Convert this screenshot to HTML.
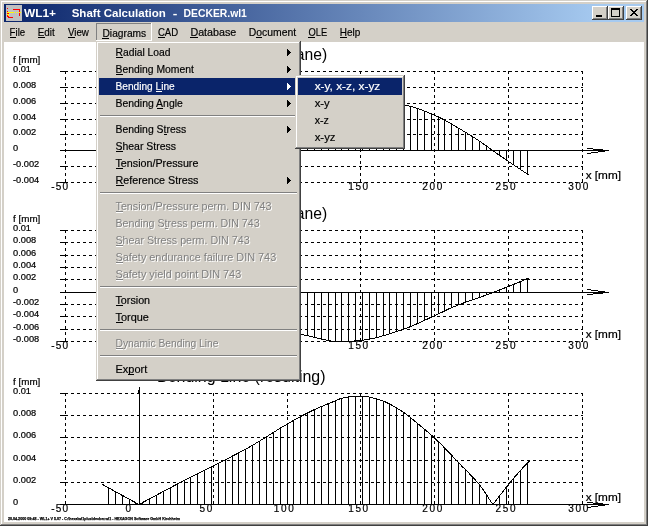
<!DOCTYPE html>
<html><head><meta charset="utf-8"><title>WL1+ Shaft Calculation - DECKER.wl1</title>
<style>html,body{margin:0;padding:0;background:#D4D0C8;overflow:hidden}svg{display:block;will-change:transform}text{white-space:pre}</style></head>
<body>
<svg width="648" height="526" viewBox="0 0 648 526" font-family="Liberation Sans, Arial, sans-serif" shape-rendering="crispEdges">
<defs><linearGradient id="tg" gradientUnits="userSpaceOnUse" x1="4" y1="0" x2="600" y2="0"><stop offset="0" stop-color="#0A246A"/><stop offset="1" stop-color="#A6CAF0"/></linearGradient></defs>
<rect x="0" y="0" width="648" height="526" fill="#D4D0C8"/>
<rect x="0" y="525" width="648" height="1" fill="#404040"/>
<rect x="647" y="0" width="1" height="526" fill="#404040"/>
<rect x="1" y="1" width="645" height="1" fill="#FFFFFF"/>
<rect x="1" y="1" width="1" height="523" fill="#FFFFFF"/>
<rect x="1" y="524" width="646" height="1" fill="#808080"/>
<rect x="646" y="1" width="1" height="524" fill="#808080"/>
<rect x="4" y="4" width="640" height="18" fill="url(#tg)"/>
<rect x="4" y="42" width="640" height="480" fill="#FFFFFF"/>
<text x="157.00" y="60.00" font-size="16.5" fill="#000" textLength="170.30" lengthAdjust="spacingAndGlyphs" >Bending Line (x-y plane)</text>
<text x="13.00" y="63.00" font-size="9.5" fill="#000" textLength="27.30" lengthAdjust="spacingAndGlyphs" stroke="#000" stroke-width="0.2">f [mm]</text>
<text x="13.00" y="72.00" font-size="9" fill="#000" textLength="18.04" lengthAdjust="spacingAndGlyphs" stroke="#000" stroke-width="0.2">0.01</text>
<rect x="60" y="71" width="5" height="1" fill="#000"/>
<line x1="65" y1="71.5" x2="583" y2="71.5" stroke="#000" stroke-width="1" stroke-dasharray="3 3"/>
<text x="13.00" y="88.00" font-size="9" fill="#000" textLength="23.19" lengthAdjust="spacingAndGlyphs" stroke="#000" stroke-width="0.2">0.008</text>
<rect x="60" y="87" width="5" height="1" fill="#000"/>
<line x1="65" y1="87.5" x2="583" y2="87.5" stroke="#000" stroke-width="1" stroke-dasharray="3 3"/>
<text x="13.00" y="104.00" font-size="9" fill="#000" textLength="23.19" lengthAdjust="spacingAndGlyphs" stroke="#000" stroke-width="0.2">0.006</text>
<rect x="60" y="103" width="5" height="1" fill="#000"/>
<line x1="65" y1="103.5" x2="583" y2="103.5" stroke="#000" stroke-width="1" stroke-dasharray="3 3"/>
<text x="13.00" y="120.00" font-size="9" fill="#000" textLength="23.19" lengthAdjust="spacingAndGlyphs" stroke="#000" stroke-width="0.2">0.004</text>
<rect x="60" y="119" width="5" height="1" fill="#000"/>
<line x1="65" y1="119.5" x2="583" y2="119.5" stroke="#000" stroke-width="1" stroke-dasharray="3 3"/>
<text x="13.00" y="135.00" font-size="9" fill="#000" textLength="23.19" lengthAdjust="spacingAndGlyphs" stroke="#000" stroke-width="0.2">0.002</text>
<rect x="60" y="134" width="5" height="1" fill="#000"/>
<line x1="65" y1="134.5" x2="583" y2="134.5" stroke="#000" stroke-width="1" stroke-dasharray="3 3"/>
<text x="13.00" y="151.00" font-size="9" fill="#000" textLength="5.15" lengthAdjust="spacingAndGlyphs" stroke="#000" stroke-width="0.2">0</text>
<rect x="60" y="150" width="5" height="1" fill="#000"/>
<rect x="65" y="150" width="544" height="1" fill="#000"/>
<text x="13.00" y="167.00" font-size="9" fill="#000" textLength="26.28" lengthAdjust="spacingAndGlyphs" stroke="#000" stroke-width="0.2">-0.002</text>
<rect x="60" y="166" width="5" height="1" fill="#000"/>
<line x1="65" y1="166.5" x2="583" y2="166.5" stroke="#000" stroke-width="1" stroke-dasharray="3 3"/>
<text x="13.00" y="183.00" font-size="9" fill="#000" textLength="26.28" lengthAdjust="spacingAndGlyphs" stroke="#000" stroke-width="0.2">-0.004</text>
<rect x="60" y="182" width="5" height="1" fill="#000"/>
<line x1="65" y1="182.5" x2="583" y2="182.5" stroke="#000" stroke-width="1" stroke-dasharray="3 3"/>
<line x1="65.5" y1="71" x2="65.5" y2="183" stroke="#000" stroke-width="1" stroke-dasharray="3 3"/>
<text x="51.30" y="190.00" font-size="10" fill="#000" textLength="16.73" lengthAdjust="spacing" stroke="#000" stroke-width="0.2">-50</text>
<line x1="139.5" y1="71" x2="139.5" y2="183" stroke="#000" stroke-width="1" stroke-dasharray="3 3"/>
<text x="125.50" y="190.00" font-size="10" fill="#000" textLength="5.56" lengthAdjust="spacing" stroke="#000" stroke-width="0.2">0</text>
<line x1="213.5" y1="71" x2="213.5" y2="183" stroke="#000" stroke-width="1" stroke-dasharray="3 3"/>
<text x="199.60" y="190.00" font-size="10" fill="#000" textLength="12.76" lengthAdjust="spacing" stroke="#000" stroke-width="0.2">50</text>
<line x1="287.5" y1="71" x2="287.5" y2="183" stroke="#000" stroke-width="1" stroke-dasharray="3 3"/>
<text x="273.80" y="190.00" font-size="10" fill="#000" textLength="19.96" lengthAdjust="spacing" stroke="#000" stroke-width="0.2">100</text>
<line x1="360.5" y1="71" x2="360.5" y2="183" stroke="#000" stroke-width="1" stroke-dasharray="3 3"/>
<text x="348.20" y="190.00" font-size="10" fill="#000" textLength="19.96" lengthAdjust="spacing" stroke="#000" stroke-width="0.2">150</text>
<line x1="434.5" y1="71" x2="434.5" y2="183" stroke="#000" stroke-width="1" stroke-dasharray="3 3"/>
<text x="422.30" y="190.00" font-size="10" fill="#000" textLength="19.96" lengthAdjust="spacing" stroke="#000" stroke-width="0.2">200</text>
<line x1="508.5" y1="71" x2="508.5" y2="183" stroke="#000" stroke-width="1" stroke-dasharray="3 3"/>
<text x="495.60" y="190.00" font-size="10" fill="#000" textLength="19.96" lengthAdjust="spacing" stroke="#000" stroke-width="0.2">250</text>
<line x1="582.5" y1="71" x2="582.5" y2="183" stroke="#000" stroke-width="1" stroke-dasharray="3 3"/>
<text x="568.30" y="190.00" font-size="10" fill="#000" textLength="19.96" lengthAdjust="spacing" stroke="#000" stroke-width="0.2">300</text>
<text x="585.70" y="179.00" font-size="10" fill="#000" textLength="35.30" lengthAdjust="spacingAndGlyphs" stroke="#000" stroke-width="0.2">x [mm]</text>
<rect x="587" y="153" width="4" height="1" fill="#000"/>
<rect x="591" y="152" width="7" height="1" fill="#000"/>
<rect x="598" y="151" width="7" height="1" fill="#000"/>
<rect x="593" y="149" width="10" height="1" fill="#000"/>
<rect x="587" y="148" width="6" height="1" fill="#000"/>
<line x1="527.5" y1="150.0" x2="527.5" y2="174.7" stroke="#000" stroke-width="1"/>
<line x1="520.5" y1="150.0" x2="520.5" y2="170.1" stroke="#000" stroke-width="1"/>
<line x1="513.5" y1="150.0" x2="513.5" y2="165.4" stroke="#000" stroke-width="1"/>
<line x1="506.5" y1="150.0" x2="506.5" y2="160.6" stroke="#000" stroke-width="1"/>
<line x1="499.5" y1="150.0" x2="499.5" y2="155.8" stroke="#000" stroke-width="1"/>
<line x1="492.5" y1="150.0" x2="492.5" y2="150.9" stroke="#000" stroke-width="1"/>
<line x1="486.5" y1="146.1" x2="486.5" y2="150.5" stroke="#000" stroke-width="1"/>
<line x1="479.5" y1="141.2" x2="479.5" y2="150.5" stroke="#000" stroke-width="1"/>
<line x1="472.5" y1="136.6" x2="472.5" y2="150.5" stroke="#000" stroke-width="1"/>
<line x1="465.5" y1="132.3" x2="465.5" y2="150.5" stroke="#000" stroke-width="1"/>
<line x1="458.5" y1="128.1" x2="458.5" y2="150.5" stroke="#000" stroke-width="1"/>
<line x1="451.5" y1="124.0" x2="451.5" y2="150.5" stroke="#000" stroke-width="1"/>
<line x1="444.5" y1="120.1" x2="444.5" y2="150.5" stroke="#000" stroke-width="1"/>
<line x1="438.5" y1="117.0" x2="438.5" y2="150.5" stroke="#000" stroke-width="1"/>
<line x1="431.5" y1="113.9" x2="431.5" y2="150.5" stroke="#000" stroke-width="1"/>
<line x1="424.5" y1="111.1" x2="424.5" y2="150.5" stroke="#000" stroke-width="1"/>
<line x1="417.5" y1="108.5" x2="417.5" y2="150.5" stroke="#000" stroke-width="1"/>
<line x1="410.5" y1="106.3" x2="410.5" y2="150.5" stroke="#000" stroke-width="1"/>
<line x1="403.5" y1="104.7" x2="403.5" y2="150.5" stroke="#000" stroke-width="1"/>
<line x1="396.5" y1="103.4" x2="396.5" y2="150.5" stroke="#000" stroke-width="1"/>
<line x1="389.5" y1="102.3" x2="389.5" y2="150.5" stroke="#000" stroke-width="1"/>
<line x1="383.5" y1="101.6" x2="383.5" y2="150.5" stroke="#000" stroke-width="1"/>
<line x1="376.5" y1="101.1" x2="376.5" y2="150.5" stroke="#000" stroke-width="1"/>
<line x1="369.5" y1="100.6" x2="369.5" y2="150.5" stroke="#000" stroke-width="1"/>
<line x1="362.5" y1="100.3" x2="362.5" y2="150.5" stroke="#000" stroke-width="1"/>
<line x1="355.5" y1="100.1" x2="355.5" y2="150.5" stroke="#000" stroke-width="1"/>
<line x1="348.5" y1="100.0" x2="348.5" y2="150.5" stroke="#000" stroke-width="1"/>
<line x1="341.5" y1="100.2" x2="341.5" y2="150.5" stroke="#000" stroke-width="1"/>
<line x1="335.5" y1="100.6" x2="335.5" y2="150.5" stroke="#000" stroke-width="1"/>
<line x1="328.5" y1="101.3" x2="328.5" y2="150.5" stroke="#000" stroke-width="1"/>
<line x1="321.5" y1="102.1" x2="321.5" y2="150.5" stroke="#000" stroke-width="1"/>
<line x1="314.5" y1="102.9" x2="314.5" y2="150.5" stroke="#000" stroke-width="1"/>
<line x1="307.5" y1="103.8" x2="307.5" y2="150.5" stroke="#000" stroke-width="1"/>
<line x1="300.5" y1="104.9" x2="300.5" y2="150.5" stroke="#000" stroke-width="1"/>
<line x1="293.5" y1="106.2" x2="293.5" y2="150.5" stroke="#000" stroke-width="1"/>
<line x1="287.5" y1="107.4" x2="287.5" y2="150.5" stroke="#000" stroke-width="1"/>
<line x1="280.5" y1="109.0" x2="280.5" y2="150.5" stroke="#000" stroke-width="1"/>
<line x1="273.5" y1="110.6" x2="273.5" y2="150.5" stroke="#000" stroke-width="1"/>
<line x1="266.5" y1="112.4" x2="266.5" y2="150.5" stroke="#000" stroke-width="1"/>
<line x1="259.5" y1="114.1" x2="259.5" y2="150.5" stroke="#000" stroke-width="1"/>
<line x1="252.5" y1="116.0" x2="252.5" y2="150.5" stroke="#000" stroke-width="1"/>
<line x1="245.5" y1="118.1" x2="245.5" y2="150.5" stroke="#000" stroke-width="1"/>
<line x1="238.5" y1="120.3" x2="238.5" y2="150.5" stroke="#000" stroke-width="1"/>
<line x1="232.5" y1="122.3" x2="232.5" y2="150.5" stroke="#000" stroke-width="1"/>
<line x1="225.5" y1="124.6" x2="225.5" y2="150.5" stroke="#000" stroke-width="1"/>
<line x1="218.5" y1="127.0" x2="218.5" y2="150.5" stroke="#000" stroke-width="1"/>
<line x1="211.5" y1="129.4" x2="211.5" y2="150.5" stroke="#000" stroke-width="1"/>
<line x1="204.5" y1="131.6" x2="204.5" y2="150.5" stroke="#000" stroke-width="1"/>
<line x1="197.5" y1="133.8" x2="197.5" y2="150.5" stroke="#000" stroke-width="1"/>
<line x1="190.5" y1="135.9" x2="190.5" y2="150.5" stroke="#000" stroke-width="1"/>
<line x1="184.5" y1="137.7" x2="184.5" y2="150.5" stroke="#000" stroke-width="1"/>
<line x1="177.5" y1="139.9" x2="177.5" y2="150.5" stroke="#000" stroke-width="1"/>
<line x1="170.5" y1="142.0" x2="170.5" y2="150.5" stroke="#000" stroke-width="1"/>
<line x1="163.5" y1="144.1" x2="163.5" y2="150.5" stroke="#000" stroke-width="1"/>
<line x1="156.5" y1="146.0" x2="156.5" y2="150.5" stroke="#000" stroke-width="1"/>
<line x1="149.5" y1="147.9" x2="149.5" y2="150.5" stroke="#000" stroke-width="1"/>
<line x1="142.5" y1="149.7" x2="142.5" y2="150.5" stroke="#000" stroke-width="1"/>
<line x1="135.5" y1="150.0" x2="135.5" y2="151.8" stroke="#000" stroke-width="1"/>
<line x1="129.5" y1="150.0" x2="129.5" y2="153.1" stroke="#000" stroke-width="1"/>
<line x1="122.5" y1="150.0" x2="122.5" y2="154.6" stroke="#000" stroke-width="1"/>
<line x1="115.5" y1="150.0" x2="115.5" y2="155.9" stroke="#000" stroke-width="1"/>
<line x1="108.5" y1="150.0" x2="108.5" y2="157.2" stroke="#000" stroke-width="1"/>
<polyline points="102.0,157.8 103.0,157.6 104.0,157.5 105.0,157.3 106.0,157.1 107.0,157.0 108.0,156.8 109.0,156.6 110.0,156.4 111.0,156.3 112.0,156.1 113.0,155.9 114.0,155.7 115.0,155.5 116.0,155.3 117.0,155.1 118.0,154.9 119.0,154.8 120.0,154.6 121.0,154.4 122.0,154.2 123.0,154.0 124.0,153.8 125.0,153.6 126.0,153.3 127.0,153.1 128.0,152.9 129.0,152.7 130.0,152.5 131.0,152.3 132.0,152.1 133.0,151.9 134.0,151.6 135.0,151.4 136.0,151.2 137.0,151.0 138.0,150.7 139.0,150.5 140.0,150.3 141.0,150.0 142.0,149.8 143.0,149.6 144.0,149.3 145.0,149.1 146.0,148.8 147.0,148.6 148.0,148.3 149.0,148.0 150.0,147.8 151.0,147.5 152.0,147.3 153.0,147.0 154.0,146.7 155.0,146.4 156.0,146.2 157.0,145.9 158.0,145.6 159.0,145.3 160.0,145.1 161.0,144.8 162.0,144.5 163.0,144.2 164.0,143.9 165.0,143.6 166.0,143.3 167.0,143.0 168.0,142.7 169.0,142.4 170.0,142.1 171.0,141.8 172.0,141.5 173.0,141.2 174.0,140.9 175.0,140.6 176.0,140.3 177.0,140.0 178.0,139.7 179.0,139.4 180.0,139.1 181.0,138.8 182.0,138.5 183.0,138.2 184.0,137.9 185.0,137.6 186.0,137.3 187.0,137.0 188.0,136.7 189.0,136.4 190.0,136.0 191.0,135.7 192.0,135.4 193.0,135.1 194.0,134.8 195.0,134.5 196.0,134.2 197.0,133.9 198.0,133.6 199.0,133.3 200.0,133.0 201.0,132.7 202.0,132.4 203.0,132.1 204.0,131.8 205.0,131.5 206.0,131.1 207.0,130.8 208.0,130.5 209.0,130.2 210.0,129.9 211.0,129.5 212.0,129.2 213.0,128.9 214.0,128.5 215.0,128.2 216.0,127.9 217.0,127.5 218.0,127.2 219.0,126.9 220.0,126.5 221.0,126.2 222.0,125.8 223.0,125.5 224.0,125.2 225.0,124.8 226.0,124.5 227.0,124.1 228.0,123.8 229.0,123.5 230.0,123.1 231.0,122.8 232.0,122.5 233.0,122.1 234.0,121.8 235.0,121.5 236.0,121.1 237.0,120.8 238.0,120.5 239.0,120.1 240.0,119.8 241.0,119.5 242.0,119.2 243.0,118.9 244.0,118.6 245.0,118.2 246.0,117.9 247.0,117.6 248.0,117.3 249.0,117.0 250.0,116.7 251.0,116.4 252.0,116.2 253.0,115.9 254.0,115.6 255.0,115.3 256.0,115.0 257.0,114.8 258.0,114.5 259.0,114.3 260.0,114.0 261.0,113.7 262.0,113.5 263.0,113.2 264.0,113.0 265.0,112.7 266.0,112.5 267.0,112.2 268.0,112.0 269.0,111.7 270.0,111.5 271.0,111.2 272.0,111.0 273.0,110.8 274.0,110.5 275.0,110.3 276.0,110.0 277.0,109.8 278.0,109.6 279.0,109.3 280.0,109.1 281.0,108.8 282.0,108.6 283.0,108.4 284.0,108.2 285.0,107.9 286.0,107.7 287.0,107.5 288.0,107.3 289.0,107.1 290.0,106.9 291.0,106.7 292.0,106.5 293.0,106.3 294.0,106.1 295.0,105.9 296.0,105.7 297.0,105.5 298.0,105.3 299.0,105.1 300.0,105.0 301.0,104.8 302.0,104.6 303.0,104.5 304.0,104.3 305.0,104.2 306.0,104.0 307.0,103.9 308.0,103.8 309.0,103.6 310.0,103.5 311.0,103.4 312.0,103.3 313.0,103.1 314.0,103.0 315.0,102.9 316.0,102.8 317.0,102.6 318.0,102.5 319.0,102.4 320.0,102.3 321.0,102.1 322.0,102.0 323.0,101.9 324.0,101.8 325.0,101.7 326.0,101.6 327.0,101.5 328.0,101.3 329.0,101.2 330.0,101.1 331.0,101.0 332.0,100.9 333.0,100.9 334.0,100.8 335.0,100.7 336.0,100.6 337.0,100.5 338.0,100.4 339.0,100.4 340.0,100.3 341.0,100.3 342.0,100.2 343.0,100.2 344.0,100.1 345.0,100.1 346.0,100.1 347.0,100.0 348.0,100.0 349.0,100.0 350.0,100.0 351.0,100.0 352.0,100.0 353.0,100.0 354.0,100.0 355.0,100.0 356.0,100.1 357.0,100.1 358.0,100.1 359.0,100.2 360.0,100.2 361.0,100.2 362.0,100.3 363.0,100.3 364.0,100.3 365.0,100.4 366.0,100.4 367.0,100.5 368.0,100.5 369.0,100.6 370.0,100.7 371.0,100.7 372.0,100.8 373.0,100.8 374.0,100.9 375.0,101.0 376.0,101.0 377.0,101.1 378.0,101.2 379.0,101.2 380.0,101.3 381.0,101.4 382.0,101.5 383.0,101.5 384.0,101.6 385.0,101.7 386.0,101.8 387.0,102.0 388.0,102.1 389.0,102.2 390.0,102.4 391.0,102.5 392.0,102.6 393.0,102.8 394.0,103.0 395.0,103.1 396.0,103.3 397.0,103.5 398.0,103.6 399.0,103.8 400.0,104.0 401.0,104.2 402.0,104.4 403.0,104.6 404.0,104.8 405.0,105.0 406.0,105.2 407.0,105.4 408.0,105.7 409.0,105.9 410.0,106.2 411.0,106.5 412.0,106.8 413.0,107.0 414.0,107.4 415.0,107.7 416.0,108.0 417.0,108.3 418.0,108.7 419.0,109.0 420.0,109.4 421.0,109.8 422.0,110.1 423.0,110.5 424.0,110.9 425.0,111.3 426.0,111.7 427.0,112.1 428.0,112.5 429.0,112.9 430.0,113.3 431.0,113.7 432.0,114.2 433.0,114.6 434.0,115.0 435.0,115.4 436.0,115.9 437.0,116.3 438.0,116.8 439.0,117.3 440.0,117.8 441.0,118.3 442.0,118.8 443.0,119.3 444.0,119.8 445.0,120.4 446.0,120.9 447.0,121.5 448.0,122.0 449.0,122.6 450.0,123.2 451.0,123.8 452.0,124.3 453.0,124.9 454.0,125.5 455.0,126.1 456.0,126.7 457.0,127.3 458.0,127.8 459.0,128.4 460.0,129.0 461.0,129.6 462.0,130.2 463.0,130.8 464.0,131.4 465.0,132.0 466.0,132.6 467.0,133.2 468.0,133.8 469.0,134.4 470.0,135.0 471.0,135.7 472.0,136.3 473.0,136.9 474.0,137.6 475.0,138.2 476.0,138.9 477.0,139.5 478.0,140.2 479.0,140.8 480.0,141.5 481.0,142.2 482.0,142.9 483.0,143.6 484.0,144.3 485.0,145.0 486.0,145.7 487.0,146.5 488.0,147.2 489.0,147.9 490.0,148.6 491.0,149.4 492.0,150.1 493.0,150.8 494.0,151.5 495.0,152.2 496.0,152.9 497.0,153.6 498.0,154.3 499.0,155.0 500.0,155.7 501.0,156.3 502.0,157.0 503.0,157.7 504.0,158.4 505.0,159.1 506.0,159.8 507.0,160.5 508.0,161.1 509.0,161.8 510.0,162.5 511.0,163.2 512.0,163.9 513.0,164.5 514.0,165.2 515.0,165.9 516.0,166.6 517.0,167.2 518.0,167.9 519.0,168.6 520.0,169.2 521.0,169.9 522.0,170.6 523.0,171.2 524.0,171.9 525.0,172.6 526.0,173.2 527.0,173.9 528.0,174.5 529.0,175.2 529.5,175.5" fill="none" stroke="#000" stroke-width="1"/>
<text x="157.00" y="219.00" font-size="16.5" fill="#000" textLength="170.30" lengthAdjust="spacingAndGlyphs" >Bending Line (x-z plane)</text>
<text x="13.00" y="222.00" font-size="9.5" fill="#000" textLength="27.30" lengthAdjust="spacingAndGlyphs" stroke="#000" stroke-width="0.2">f [mm]</text>
<text x="13.00" y="231.00" font-size="9" fill="#000" textLength="18.04" lengthAdjust="spacingAndGlyphs" stroke="#000" stroke-width="0.2">0.01</text>
<rect x="60" y="230" width="5" height="1" fill="#000"/>
<line x1="65" y1="230.5" x2="583" y2="230.5" stroke="#000" stroke-width="1" stroke-dasharray="3 3"/>
<text x="13.00" y="243.00" font-size="9" fill="#000" textLength="23.19" lengthAdjust="spacingAndGlyphs" stroke="#000" stroke-width="0.2">0.008</text>
<rect x="60" y="242" width="5" height="1" fill="#000"/>
<line x1="65" y1="242.5" x2="583" y2="242.5" stroke="#000" stroke-width="1" stroke-dasharray="3 3"/>
<text x="13.00" y="256.00" font-size="9" fill="#000" textLength="23.19" lengthAdjust="spacingAndGlyphs" stroke="#000" stroke-width="0.2">0.006</text>
<rect x="60" y="255" width="5" height="1" fill="#000"/>
<line x1="65" y1="255.5" x2="583" y2="255.5" stroke="#000" stroke-width="1" stroke-dasharray="3 3"/>
<text x="13.00" y="268.00" font-size="9" fill="#000" textLength="23.19" lengthAdjust="spacingAndGlyphs" stroke="#000" stroke-width="0.2">0.004</text>
<rect x="60" y="267" width="5" height="1" fill="#000"/>
<line x1="65" y1="267.5" x2="583" y2="267.5" stroke="#000" stroke-width="1" stroke-dasharray="3 3"/>
<text x="13.00" y="280.00" font-size="9" fill="#000" textLength="23.19" lengthAdjust="spacingAndGlyphs" stroke="#000" stroke-width="0.2">0.002</text>
<rect x="60" y="279" width="5" height="1" fill="#000"/>
<line x1="65" y1="279.5" x2="583" y2="279.5" stroke="#000" stroke-width="1" stroke-dasharray="3 3"/>
<text x="13.00" y="293.00" font-size="9" fill="#000" textLength="5.15" lengthAdjust="spacingAndGlyphs" stroke="#000" stroke-width="0.2">0</text>
<rect x="60" y="292" width="5" height="1" fill="#000"/>
<rect x="65" y="292" width="544" height="1" fill="#000"/>
<text x="13.00" y="305.00" font-size="9" fill="#000" textLength="26.28" lengthAdjust="spacingAndGlyphs" stroke="#000" stroke-width="0.2">-0.002</text>
<rect x="60" y="304" width="5" height="1" fill="#000"/>
<line x1="65" y1="304.5" x2="583" y2="304.5" stroke="#000" stroke-width="1" stroke-dasharray="3 3"/>
<text x="13.00" y="317.00" font-size="9" fill="#000" textLength="26.28" lengthAdjust="spacingAndGlyphs" stroke="#000" stroke-width="0.2">-0.004</text>
<rect x="60" y="316" width="5" height="1" fill="#000"/>
<line x1="65" y1="316.5" x2="583" y2="316.5" stroke="#000" stroke-width="1" stroke-dasharray="3 3"/>
<text x="13.00" y="330.00" font-size="9" fill="#000" textLength="26.28" lengthAdjust="spacingAndGlyphs" stroke="#000" stroke-width="0.2">-0.006</text>
<rect x="60" y="329" width="5" height="1" fill="#000"/>
<line x1="65" y1="329.5" x2="583" y2="329.5" stroke="#000" stroke-width="1" stroke-dasharray="3 3"/>
<text x="13.00" y="342.00" font-size="9" fill="#000" textLength="26.28" lengthAdjust="spacingAndGlyphs" stroke="#000" stroke-width="0.2">-0.008</text>
<rect x="60" y="341" width="5" height="1" fill="#000"/>
<line x1="65" y1="341.5" x2="583" y2="341.5" stroke="#000" stroke-width="1" stroke-dasharray="3 3"/>
<line x1="65.5" y1="230" x2="65.5" y2="342" stroke="#000" stroke-width="1" stroke-dasharray="3 3"/>
<text x="51.30" y="349.00" font-size="10" fill="#000" textLength="16.73" lengthAdjust="spacing" stroke="#000" stroke-width="0.2">-50</text>
<line x1="139.5" y1="230" x2="139.5" y2="342" stroke="#000" stroke-width="1" stroke-dasharray="3 3"/>
<text x="125.50" y="349.00" font-size="10" fill="#000" textLength="5.56" lengthAdjust="spacing" stroke="#000" stroke-width="0.2">0</text>
<line x1="213.5" y1="230" x2="213.5" y2="342" stroke="#000" stroke-width="1" stroke-dasharray="3 3"/>
<text x="199.60" y="349.00" font-size="10" fill="#000" textLength="12.76" lengthAdjust="spacing" stroke="#000" stroke-width="0.2">50</text>
<line x1="287.5" y1="230" x2="287.5" y2="342" stroke="#000" stroke-width="1" stroke-dasharray="3 3"/>
<text x="273.80" y="349.00" font-size="10" fill="#000" textLength="19.96" lengthAdjust="spacing" stroke="#000" stroke-width="0.2">100</text>
<line x1="360.5" y1="230" x2="360.5" y2="342" stroke="#000" stroke-width="1" stroke-dasharray="3 3"/>
<text x="348.20" y="349.00" font-size="10" fill="#000" textLength="19.96" lengthAdjust="spacing" stroke="#000" stroke-width="0.2">150</text>
<line x1="434.5" y1="230" x2="434.5" y2="342" stroke="#000" stroke-width="1" stroke-dasharray="3 3"/>
<text x="422.30" y="349.00" font-size="10" fill="#000" textLength="19.96" lengthAdjust="spacing" stroke="#000" stroke-width="0.2">200</text>
<line x1="508.5" y1="230" x2="508.5" y2="342" stroke="#000" stroke-width="1" stroke-dasharray="3 3"/>
<text x="495.60" y="349.00" font-size="10" fill="#000" textLength="19.96" lengthAdjust="spacing" stroke="#000" stroke-width="0.2">250</text>
<line x1="582.5" y1="230" x2="582.5" y2="342" stroke="#000" stroke-width="1" stroke-dasharray="3 3"/>
<text x="568.30" y="349.00" font-size="10" fill="#000" textLength="19.96" lengthAdjust="spacing" stroke="#000" stroke-width="0.2">300</text>
<text x="585.70" y="338.00" font-size="10" fill="#000" textLength="35.30" lengthAdjust="spacingAndGlyphs" stroke="#000" stroke-width="0.2">x [mm]</text>
<rect x="587" y="289" width="4" height="1" fill="#000"/>
<rect x="591" y="290" width="7" height="1" fill="#000"/>
<rect x="598" y="291" width="7" height="1" fill="#000"/>
<rect x="593" y="293" width="10" height="1" fill="#000"/>
<rect x="587" y="294" width="6" height="1" fill="#000"/>
<line x1="527.5" y1="278.6" x2="527.5" y2="292.5" stroke="#000" stroke-width="1"/>
<line x1="520.5" y1="281.5" x2="520.5" y2="292.5" stroke="#000" stroke-width="1"/>
<line x1="513.5" y1="284.4" x2="513.5" y2="292.5" stroke="#000" stroke-width="1"/>
<line x1="506.5" y1="287.2" x2="506.5" y2="292.5" stroke="#000" stroke-width="1"/>
<line x1="499.5" y1="290.0" x2="499.5" y2="292.5" stroke="#000" stroke-width="1"/>
<line x1="492.5" y1="292.0" x2="492.5" y2="293.2" stroke="#000" stroke-width="1"/>
<line x1="486.5" y1="292.0" x2="486.5" y2="295.4" stroke="#000" stroke-width="1"/>
<line x1="479.5" y1="292.0" x2="479.5" y2="297.9" stroke="#000" stroke-width="1"/>
<line x1="472.5" y1="292.0" x2="472.5" y2="300.3" stroke="#000" stroke-width="1"/>
<line x1="465.5" y1="292.0" x2="465.5" y2="302.8" stroke="#000" stroke-width="1"/>
<line x1="458.5" y1="292.0" x2="458.5" y2="305.4" stroke="#000" stroke-width="1"/>
<line x1="451.5" y1="292.0" x2="451.5" y2="308.2" stroke="#000" stroke-width="1"/>
<line x1="444.5" y1="292.0" x2="444.5" y2="311.4" stroke="#000" stroke-width="1"/>
<line x1="438.5" y1="292.0" x2="438.5" y2="314.4" stroke="#000" stroke-width="1"/>
<line x1="431.5" y1="292.0" x2="431.5" y2="317.6" stroke="#000" stroke-width="1"/>
<line x1="424.5" y1="292.0" x2="424.5" y2="320.9" stroke="#000" stroke-width="1"/>
<line x1="417.5" y1="292.0" x2="417.5" y2="324.1" stroke="#000" stroke-width="1"/>
<line x1="410.5" y1="292.0" x2="410.5" y2="327.1" stroke="#000" stroke-width="1"/>
<line x1="403.5" y1="292.0" x2="403.5" y2="329.8" stroke="#000" stroke-width="1"/>
<line x1="396.5" y1="292.0" x2="396.5" y2="332.1" stroke="#000" stroke-width="1"/>
<line x1="389.5" y1="292.0" x2="389.5" y2="334.3" stroke="#000" stroke-width="1"/>
<line x1="383.5" y1="292.0" x2="383.5" y2="336.1" stroke="#000" stroke-width="1"/>
<line x1="376.5" y1="292.0" x2="376.5" y2="338.1" stroke="#000" stroke-width="1"/>
<line x1="369.5" y1="292.0" x2="369.5" y2="339.6" stroke="#000" stroke-width="1"/>
<line x1="362.5" y1="292.0" x2="362.5" y2="340.7" stroke="#000" stroke-width="1"/>
<line x1="355.5" y1="292.0" x2="355.5" y2="341.4" stroke="#000" stroke-width="1"/>
<line x1="348.5" y1="292.0" x2="348.5" y2="341.9" stroke="#000" stroke-width="1"/>
<line x1="341.5" y1="292.0" x2="341.5" y2="342.2" stroke="#000" stroke-width="1"/>
<line x1="335.5" y1="292.0" x2="335.5" y2="342.0" stroke="#000" stroke-width="1"/>
<line x1="328.5" y1="292.0" x2="328.5" y2="341.1" stroke="#000" stroke-width="1"/>
<line x1="321.5" y1="292.0" x2="321.5" y2="339.7" stroke="#000" stroke-width="1"/>
<line x1="314.5" y1="292.0" x2="314.5" y2="338.0" stroke="#000" stroke-width="1"/>
<line x1="307.5" y1="292.0" x2="307.5" y2="336.3" stroke="#000" stroke-width="1"/>
<line x1="300.5" y1="292.0" x2="300.5" y2="334.9" stroke="#000" stroke-width="1"/>
<line x1="293.5" y1="292.0" x2="293.5" y2="333.8" stroke="#000" stroke-width="1"/>
<line x1="287.5" y1="292.0" x2="287.5" y2="332.9" stroke="#000" stroke-width="1"/>
<line x1="280.5" y1="292.0" x2="280.5" y2="331.9" stroke="#000" stroke-width="1"/>
<line x1="273.5" y1="292.0" x2="273.5" y2="330.8" stroke="#000" stroke-width="1"/>
<line x1="266.5" y1="292.0" x2="266.5" y2="329.7" stroke="#000" stroke-width="1"/>
<line x1="259.5" y1="292.0" x2="259.5" y2="328.4" stroke="#000" stroke-width="1"/>
<line x1="252.5" y1="292.0" x2="252.5" y2="326.9" stroke="#000" stroke-width="1"/>
<line x1="245.5" y1="292.0" x2="245.5" y2="325.3" stroke="#000" stroke-width="1"/>
<line x1="238.5" y1="292.0" x2="238.5" y2="323.5" stroke="#000" stroke-width="1"/>
<line x1="232.5" y1="292.0" x2="232.5" y2="321.9" stroke="#000" stroke-width="1"/>
<line x1="225.5" y1="292.0" x2="225.5" y2="319.9" stroke="#000" stroke-width="1"/>
<line x1="218.5" y1="292.0" x2="218.5" y2="317.9" stroke="#000" stroke-width="1"/>
<line x1="211.5" y1="292.0" x2="211.5" y2="315.9" stroke="#000" stroke-width="1"/>
<line x1="204.5" y1="292.0" x2="204.5" y2="313.8" stroke="#000" stroke-width="1"/>
<line x1="197.5" y1="292.0" x2="197.5" y2="311.8" stroke="#000" stroke-width="1"/>
<line x1="190.5" y1="292.0" x2="190.5" y2="309.6" stroke="#000" stroke-width="1"/>
<line x1="184.5" y1="292.0" x2="184.5" y2="307.7" stroke="#000" stroke-width="1"/>
<line x1="177.5" y1="292.0" x2="177.5" y2="305.3" stroke="#000" stroke-width="1"/>
<line x1="170.5" y1="292.0" x2="170.5" y2="303.0" stroke="#000" stroke-width="1"/>
<line x1="163.5" y1="292.0" x2="163.5" y2="300.6" stroke="#000" stroke-width="1"/>
<line x1="156.5" y1="292.0" x2="156.5" y2="298.3" stroke="#000" stroke-width="1"/>
<line x1="149.5" y1="292.0" x2="149.5" y2="296.1" stroke="#000" stroke-width="1"/>
<line x1="142.5" y1="292.0" x2="142.5" y2="294.0" stroke="#000" stroke-width="1"/>
<line x1="135.5" y1="291.6" x2="135.5" y2="292.5" stroke="#000" stroke-width="1"/>
<line x1="129.5" y1="290.0" x2="129.5" y2="292.5" stroke="#000" stroke-width="1"/>
<line x1="122.5" y1="288.2" x2="122.5" y2="292.5" stroke="#000" stroke-width="1"/>
<line x1="115.5" y1="286.5" x2="115.5" y2="292.5" stroke="#000" stroke-width="1"/>
<line x1="108.5" y1="284.9" x2="108.5" y2="292.5" stroke="#000" stroke-width="1"/>
<polyline points="102.0,283.5 103.0,283.7 104.0,283.9 105.0,284.1 106.0,284.4 107.0,284.6 108.0,284.8 109.0,285.0 110.0,285.3 111.0,285.5 112.0,285.7 113.0,286.0 114.0,286.2 115.0,286.4 116.0,286.7 117.0,286.9 118.0,287.1 119.0,287.4 120.0,287.6 121.0,287.8 122.0,288.1 123.0,288.3 124.0,288.6 125.0,288.8 126.0,289.1 127.0,289.3 128.0,289.6 129.0,289.9 130.0,290.1 131.0,290.4 132.0,290.6 133.0,290.9 134.0,291.2 135.0,291.4 136.0,291.7 137.0,292.0 138.0,292.2 139.0,292.5 140.0,292.8 141.0,293.1 142.0,293.3 143.0,293.6 144.0,293.9 145.0,294.2 146.0,294.5 147.0,294.8 148.0,295.1 149.0,295.4 150.0,295.7 151.0,296.0 152.0,296.3 153.0,296.7 154.0,297.0 155.0,297.3 156.0,297.6 157.0,297.9 158.0,298.3 159.0,298.6 160.0,298.9 161.0,299.3 162.0,299.6 163.0,299.9 164.0,300.3 165.0,300.6 166.0,300.9 167.0,301.3 168.0,301.6 169.0,301.9 170.0,302.3 171.0,302.6 172.0,303.0 173.0,303.3 174.0,303.6 175.0,304.0 176.0,304.3 177.0,304.7 178.0,305.0 179.0,305.3 180.0,305.7 181.0,306.0 182.0,306.3 183.0,306.7 184.0,307.0 185.0,307.3 186.0,307.7 187.0,308.0 188.0,308.3 189.0,308.6 190.0,308.9 191.0,309.3 192.0,309.6 193.0,309.9 194.0,310.2 195.0,310.5 196.0,310.8 197.0,311.1 198.0,311.4 199.0,311.7 200.0,312.0 201.0,312.3 202.0,312.6 203.0,312.9 204.0,313.2 205.0,313.5 206.0,313.8 207.0,314.0 208.0,314.3 209.0,314.6 210.0,314.9 211.0,315.2 212.0,315.5 213.0,315.8 214.0,316.1 215.0,316.4 216.0,316.7 217.0,317.0 218.0,317.3 219.0,317.6 220.0,317.9 221.0,318.2 222.0,318.4 223.0,318.7 224.0,319.0 225.0,319.3 226.0,319.6 227.0,319.9 228.0,320.2 229.0,320.4 230.0,320.7 231.0,321.0 232.0,321.3 233.0,321.5 234.0,321.8 235.0,322.1 236.0,322.4 237.0,322.6 238.0,322.9 239.0,323.1 240.0,323.4 241.0,323.7 242.0,323.9 243.0,324.2 244.0,324.4 245.0,324.7 246.0,324.9 247.0,325.2 248.0,325.4 249.0,325.6 250.0,325.9 251.0,326.1 252.0,326.3 253.0,326.5 254.0,326.8 255.0,327.0 256.0,327.2 257.0,327.4 258.0,327.6 259.0,327.8 260.0,328.0 261.0,328.2 262.0,328.4 263.0,328.6 264.0,328.8 265.0,328.9 266.0,329.1 267.0,329.3 268.0,329.4 269.0,329.6 270.0,329.8 271.0,329.9 272.0,330.1 273.0,330.3 274.0,330.4 275.0,330.6 276.0,330.7 277.0,330.9 278.0,331.0 279.0,331.2 280.0,331.3 281.0,331.5 282.0,331.6 283.0,331.7 284.0,331.9 285.0,332.0 286.0,332.2 287.0,332.3 288.0,332.5 289.0,332.6 290.0,332.8 291.0,332.9 292.0,333.1 293.0,333.2 294.0,333.4 295.0,333.5 296.0,333.7 297.0,333.8 298.0,334.0 299.0,334.2 300.0,334.3 301.0,334.5 302.0,334.7 303.0,334.9 304.0,335.1 305.0,335.3 306.0,335.5 307.0,335.7 308.0,335.9 309.0,336.1 310.0,336.4 311.0,336.6 312.0,336.9 313.0,337.1 314.0,337.4 315.0,337.6 316.0,337.8 317.0,338.1 318.0,338.3 319.0,338.6 320.0,338.8 321.0,339.0 322.0,339.3 323.0,339.5 324.0,339.7 325.0,339.9 326.0,340.1 327.0,340.3 328.0,340.5 329.0,340.7 330.0,340.8 331.0,341.0 332.0,341.1 333.0,341.3 334.0,341.4 335.0,341.5 336.0,341.6 337.0,341.6 338.0,341.7 339.0,341.7 340.0,341.7 341.0,341.7 342.0,341.7 343.0,341.7 344.0,341.6 345.0,341.6 346.0,341.6 347.0,341.5 348.0,341.5 349.0,341.4 350.0,341.3 351.0,341.3 352.0,341.2 353.0,341.1 354.0,341.0 355.0,340.9 356.0,340.9 357.0,340.8 358.0,340.7 359.0,340.6 360.0,340.5 361.0,340.4 362.0,340.3 363.0,340.2 364.0,340.0 365.0,339.9 366.0,339.7 367.0,339.6 368.0,339.4 369.0,339.2 370.0,339.0 371.0,338.8 372.0,338.6 373.0,338.4 374.0,338.2 375.0,337.9 376.0,337.7 377.0,337.4 378.0,337.2 379.0,336.9 380.0,336.6 381.0,336.4 382.0,336.1 383.0,335.8 384.0,335.5 385.0,335.2 386.0,334.9 387.0,334.6 388.0,334.3 389.0,334.0 390.0,333.7 391.0,333.4 392.0,333.1 393.0,332.7 394.0,332.4 395.0,332.1 396.0,331.8 397.0,331.5 398.0,331.1 399.0,330.8 400.0,330.5 401.0,330.2 402.0,329.8 403.0,329.5 404.0,329.1 405.0,328.8 406.0,328.4 407.0,328.0 408.0,327.6 409.0,327.2 410.0,326.8 411.0,326.4 412.0,326.0 413.0,325.6 414.0,325.1 415.0,324.7 416.0,324.3 417.0,323.8 418.0,323.4 419.0,322.9 420.0,322.4 421.0,322.0 422.0,321.5 423.0,321.1 424.0,320.6 425.0,320.1 426.0,319.7 427.0,319.2 428.0,318.7 429.0,318.3 430.0,317.8 431.0,317.3 432.0,316.9 433.0,316.4 434.0,316.0 435.0,315.5 436.0,315.0 437.0,314.6 438.0,314.1 439.0,313.6 440.0,313.1 441.0,312.7 442.0,312.2 443.0,311.7 444.0,311.2 445.0,310.7 446.0,310.2 447.0,309.7 448.0,309.3 449.0,308.8 450.0,308.4 451.0,307.9 452.0,307.5 453.0,307.1 454.0,306.7 455.0,306.3 456.0,305.9 457.0,305.5 458.0,305.1 459.0,304.7 460.0,304.3 461.0,303.9 462.0,303.6 463.0,303.2 464.0,302.8 465.0,302.5 466.0,302.1 467.0,301.8 468.0,301.4 469.0,301.0 470.0,300.7 471.0,300.3 472.0,300.0 473.0,299.6 474.0,299.3 475.0,299.0 476.0,298.6 477.0,298.3 478.0,297.9 479.0,297.6 480.0,297.2 481.0,296.9 482.0,296.5 483.0,296.2 484.0,295.8 485.0,295.5 486.0,295.1 487.0,294.7 488.0,294.4 489.0,294.0 490.0,293.6 491.0,293.3 492.0,292.9 493.0,292.5 494.0,292.1 495.0,291.7 496.0,291.3 497.0,291.0 498.0,290.6 499.0,290.2 500.0,289.8 501.0,289.4 502.0,289.0 503.0,288.6 504.0,288.2 505.0,287.8 506.0,287.4 507.0,287.0 508.0,286.6 509.0,286.2 510.0,285.8 511.0,285.4 512.0,285.0 513.0,284.6 514.0,284.2 515.0,283.8 516.0,283.4 517.0,283.0 518.0,282.6 519.0,282.2 520.0,281.8 521.0,281.3 522.0,280.9 523.0,280.5 524.0,280.1 525.0,279.7 526.0,279.3 527.0,278.8 528.0,278.4 529.0,278.0 529.5,277.8" fill="none" stroke="#000" stroke-width="1"/>
<text x="157.00" y="382.00" font-size="16.5" fill="#000" textLength="168.50" lengthAdjust="spacingAndGlyphs" >Bending Line (resulting)</text>
<text x="13.00" y="385.00" font-size="9.5" fill="#000" textLength="27.30" lengthAdjust="spacingAndGlyphs" stroke="#000" stroke-width="0.2">f [mm]</text>
<text x="13.00" y="394.00" font-size="9" fill="#000" textLength="18.04" lengthAdjust="spacingAndGlyphs" stroke="#000" stroke-width="0.2">0.01</text>
<rect x="60" y="393" width="5" height="1" fill="#000"/>
<line x1="65" y1="393.5" x2="583" y2="393.5" stroke="#000" stroke-width="1" stroke-dasharray="3 3"/>
<text x="13.00" y="416.00" font-size="9" fill="#000" textLength="23.19" lengthAdjust="spacingAndGlyphs" stroke="#000" stroke-width="0.2">0.008</text>
<rect x="60" y="415" width="5" height="1" fill="#000"/>
<line x1="65" y1="415.5" x2="583" y2="415.5" stroke="#000" stroke-width="1" stroke-dasharray="3 3"/>
<text x="13.00" y="438.00" font-size="9" fill="#000" textLength="23.19" lengthAdjust="spacingAndGlyphs" stroke="#000" stroke-width="0.2">0.006</text>
<rect x="60" y="437" width="5" height="1" fill="#000"/>
<line x1="65" y1="437.5" x2="583" y2="437.5" stroke="#000" stroke-width="1" stroke-dasharray="3 3"/>
<text x="13.00" y="461.00" font-size="9" fill="#000" textLength="23.19" lengthAdjust="spacingAndGlyphs" stroke="#000" stroke-width="0.2">0.004</text>
<rect x="60" y="460" width="5" height="1" fill="#000"/>
<line x1="65" y1="460.5" x2="583" y2="460.5" stroke="#000" stroke-width="1" stroke-dasharray="3 3"/>
<text x="13.00" y="483.00" font-size="9" fill="#000" textLength="23.19" lengthAdjust="spacingAndGlyphs" stroke="#000" stroke-width="0.2">0.002</text>
<rect x="60" y="482" width="5" height="1" fill="#000"/>
<line x1="65" y1="482.5" x2="583" y2="482.5" stroke="#000" stroke-width="1" stroke-dasharray="3 3"/>
<text x="13.00" y="505.00" font-size="9" fill="#000" textLength="5.15" lengthAdjust="spacingAndGlyphs" stroke="#000" stroke-width="0.2">0</text>
<rect x="60" y="504" width="5" height="1" fill="#000"/>
<rect x="65" y="504" width="544" height="1" fill="#000"/>
<line x1="65.5" y1="393" x2="65.5" y2="505" stroke="#000" stroke-width="1" stroke-dasharray="3 3"/>
<text x="51.30" y="512.00" font-size="10" fill="#000" textLength="16.73" lengthAdjust="spacing" stroke="#000" stroke-width="0.2">-50</text>
<line x1="139.5" y1="393" x2="139.5" y2="505" stroke="#000" stroke-width="1" stroke-dasharray="3 3"/>
<text x="125.50" y="512.00" font-size="10" fill="#000" textLength="5.56" lengthAdjust="spacing" stroke="#000" stroke-width="0.2">0</text>
<line x1="213.5" y1="393" x2="213.5" y2="505" stroke="#000" stroke-width="1" stroke-dasharray="3 3"/>
<text x="199.60" y="512.00" font-size="10" fill="#000" textLength="12.76" lengthAdjust="spacing" stroke="#000" stroke-width="0.2">50</text>
<line x1="287.5" y1="393" x2="287.5" y2="505" stroke="#000" stroke-width="1" stroke-dasharray="3 3"/>
<text x="273.80" y="512.00" font-size="10" fill="#000" textLength="19.96" lengthAdjust="spacing" stroke="#000" stroke-width="0.2">100</text>
<line x1="360.5" y1="393" x2="360.5" y2="505" stroke="#000" stroke-width="1" stroke-dasharray="3 3"/>
<text x="348.20" y="512.00" font-size="10" fill="#000" textLength="19.96" lengthAdjust="spacing" stroke="#000" stroke-width="0.2">150</text>
<line x1="434.5" y1="393" x2="434.5" y2="505" stroke="#000" stroke-width="1" stroke-dasharray="3 3"/>
<text x="422.30" y="512.00" font-size="10" fill="#000" textLength="19.96" lengthAdjust="spacing" stroke="#000" stroke-width="0.2">200</text>
<line x1="508.5" y1="393" x2="508.5" y2="505" stroke="#000" stroke-width="1" stroke-dasharray="3 3"/>
<text x="495.60" y="512.00" font-size="10" fill="#000" textLength="19.96" lengthAdjust="spacing" stroke="#000" stroke-width="0.2">250</text>
<line x1="582.5" y1="393" x2="582.5" y2="505" stroke="#000" stroke-width="1" stroke-dasharray="3 3"/>
<text x="568.30" y="512.00" font-size="10" fill="#000" textLength="19.96" lengthAdjust="spacing" stroke="#000" stroke-width="0.2">300</text>
<text x="585.70" y="501.00" font-size="10" fill="#000" textLength="35.30" lengthAdjust="spacingAndGlyphs" stroke="#000" stroke-width="0.2">x [mm]</text>
<rect x="587" y="507" width="4" height="1" fill="#000"/>
<rect x="591" y="506" width="7" height="1" fill="#000"/>
<rect x="598" y="505" width="7" height="1" fill="#000"/>
<rect x="593" y="503" width="10" height="1" fill="#000"/>
<rect x="587" y="502" width="6" height="1" fill="#000"/>
<rect x="139" y="387" width="1" height="117" fill="#000"/>
<rect x="138" y="390" width="1" height="3" fill="#000"/>
<line x1="527.5" y1="463.0" x2="527.5" y2="504.5" stroke="#000" stroke-width="1"/>
<line x1="520.5" y1="470.5" x2="520.5" y2="504.5" stroke="#000" stroke-width="1"/>
<line x1="513.5" y1="478.5" x2="513.5" y2="504.5" stroke="#000" stroke-width="1"/>
<line x1="506.5" y1="487.0" x2="506.5" y2="504.5" stroke="#000" stroke-width="1"/>
<line x1="499.5" y1="495.9" x2="499.5" y2="504.5" stroke="#000" stroke-width="1"/>
<line x1="492.5" y1="503.8" x2="492.5" y2="504.5" stroke="#000" stroke-width="1"/>
<line x1="486.5" y1="494.9" x2="486.5" y2="504.5" stroke="#000" stroke-width="1"/>
<line x1="479.5" y1="484.9" x2="479.5" y2="504.5" stroke="#000" stroke-width="1"/>
<line x1="472.5" y1="477.0" x2="472.5" y2="504.5" stroke="#000" stroke-width="1"/>
<line x1="465.5" y1="469.8" x2="465.5" y2="504.5" stroke="#000" stroke-width="1"/>
<line x1="458.5" y1="462.6" x2="458.5" y2="504.5" stroke="#000" stroke-width="1"/>
<line x1="451.5" y1="455.2" x2="451.5" y2="504.5" stroke="#000" stroke-width="1"/>
<line x1="444.5" y1="447.9" x2="444.5" y2="504.5" stroke="#000" stroke-width="1"/>
<line x1="438.5" y1="441.8" x2="438.5" y2="504.5" stroke="#000" stroke-width="1"/>
<line x1="431.5" y1="435.3" x2="431.5" y2="504.5" stroke="#000" stroke-width="1"/>
<line x1="424.5" y1="429.2" x2="424.5" y2="504.5" stroke="#000" stroke-width="1"/>
<line x1="417.5" y1="423.4" x2="417.5" y2="504.5" stroke="#000" stroke-width="1"/>
<line x1="410.5" y1="417.6" x2="410.5" y2="504.5" stroke="#000" stroke-width="1"/>
<line x1="403.5" y1="412.3" x2="403.5" y2="504.5" stroke="#000" stroke-width="1"/>
<line x1="396.5" y1="407.9" x2="396.5" y2="504.5" stroke="#000" stroke-width="1"/>
<line x1="389.5" y1="403.9" x2="389.5" y2="504.5" stroke="#000" stroke-width="1"/>
<line x1="383.5" y1="401.2" x2="383.5" y2="504.5" stroke="#000" stroke-width="1"/>
<line x1="376.5" y1="399.0" x2="376.5" y2="504.5" stroke="#000" stroke-width="1"/>
<line x1="369.5" y1="397.2" x2="369.5" y2="504.5" stroke="#000" stroke-width="1"/>
<line x1="362.5" y1="396.1" x2="362.5" y2="504.5" stroke="#000" stroke-width="1"/>
<line x1="355.5" y1="396.2" x2="355.5" y2="504.5" stroke="#000" stroke-width="1"/>
<line x1="348.5" y1="397.0" x2="348.5" y2="504.5" stroke="#000" stroke-width="1"/>
<line x1="341.5" y1="398.3" x2="341.5" y2="504.5" stroke="#000" stroke-width="1"/>
<line x1="335.5" y1="400.7" x2="335.5" y2="504.5" stroke="#000" stroke-width="1"/>
<line x1="328.5" y1="403.6" x2="328.5" y2="504.5" stroke="#000" stroke-width="1"/>
<line x1="321.5" y1="406.5" x2="321.5" y2="504.5" stroke="#000" stroke-width="1"/>
<line x1="314.5" y1="409.6" x2="314.5" y2="504.5" stroke="#000" stroke-width="1"/>
<line x1="307.5" y1="412.9" x2="307.5" y2="504.5" stroke="#000" stroke-width="1"/>
<line x1="300.5" y1="416.6" x2="300.5" y2="504.5" stroke="#000" stroke-width="1"/>
<line x1="293.5" y1="420.5" x2="293.5" y2="504.5" stroke="#000" stroke-width="1"/>
<line x1="287.5" y1="423.9" x2="287.5" y2="504.5" stroke="#000" stroke-width="1"/>
<line x1="280.5" y1="428.0" x2="280.5" y2="504.5" stroke="#000" stroke-width="1"/>
<line x1="273.5" y1="432.4" x2="273.5" y2="504.5" stroke="#000" stroke-width="1"/>
<line x1="266.5" y1="436.8" x2="266.5" y2="504.5" stroke="#000" stroke-width="1"/>
<line x1="259.5" y1="441.1" x2="259.5" y2="504.5" stroke="#000" stroke-width="1"/>
<line x1="252.5" y1="445.3" x2="252.5" y2="504.5" stroke="#000" stroke-width="1"/>
<line x1="245.5" y1="449.2" x2="245.5" y2="504.5" stroke="#000" stroke-width="1"/>
<line x1="238.5" y1="452.9" x2="238.5" y2="504.5" stroke="#000" stroke-width="1"/>
<line x1="232.5" y1="456.1" x2="232.5" y2="504.5" stroke="#000" stroke-width="1"/>
<line x1="225.5" y1="459.7" x2="225.5" y2="504.5" stroke="#000" stroke-width="1"/>
<line x1="218.5" y1="463.2" x2="218.5" y2="504.5" stroke="#000" stroke-width="1"/>
<line x1="211.5" y1="466.8" x2="211.5" y2="504.5" stroke="#000" stroke-width="1"/>
<line x1="204.5" y1="470.3" x2="204.5" y2="504.5" stroke="#000" stroke-width="1"/>
<line x1="197.5" y1="473.7" x2="197.5" y2="504.5" stroke="#000" stroke-width="1"/>
<line x1="190.5" y1="477.2" x2="190.5" y2="504.5" stroke="#000" stroke-width="1"/>
<line x1="184.5" y1="480.3" x2="184.5" y2="504.5" stroke="#000" stroke-width="1"/>
<line x1="177.5" y1="484.0" x2="177.5" y2="504.5" stroke="#000" stroke-width="1"/>
<line x1="170.5" y1="487.7" x2="170.5" y2="504.5" stroke="#000" stroke-width="1"/>
<line x1="163.5" y1="491.4" x2="163.5" y2="504.5" stroke="#000" stroke-width="1"/>
<line x1="156.5" y1="495.1" x2="156.5" y2="504.5" stroke="#000" stroke-width="1"/>
<line x1="149.5" y1="498.8" x2="149.5" y2="504.5" stroke="#000" stroke-width="1"/>
<line x1="142.5" y1="502.6" x2="142.5" y2="504.5" stroke="#000" stroke-width="1"/>
<line x1="135.5" y1="502.6" x2="135.5" y2="504.5" stroke="#000" stroke-width="1"/>
<line x1="129.5" y1="499.4" x2="129.5" y2="504.5" stroke="#000" stroke-width="1"/>
<line x1="122.5" y1="495.5" x2="122.5" y2="504.5" stroke="#000" stroke-width="1"/>
<line x1="115.5" y1="491.7" x2="115.5" y2="504.5" stroke="#000" stroke-width="1"/>
<line x1="108.5" y1="487.8" x2="108.5" y2="504.5" stroke="#000" stroke-width="1"/>
<polyline points="102.0,484.2 103.0,484.8 104.0,485.3 105.0,485.9 106.0,486.4 107.0,487.0 108.0,487.5 109.0,488.1 110.0,488.6 111.0,489.2 112.0,489.7 113.0,490.3 114.0,490.9 115.0,491.4 116.0,492.0 117.0,492.5 118.0,493.1 119.0,493.6 120.0,494.2 121.0,494.7 122.0,495.3 123.0,495.8 124.0,496.3 125.0,496.9 126.0,497.4 127.0,498.0 128.0,498.5 129.0,499.1 130.0,499.6 131.0,500.2 132.0,500.7 133.0,501.3 134.0,501.8 135.0,502.3 136.0,502.9 137.0,503.4 138.0,504.0 139.0,504.5 140.0,504.0 141.0,503.4 142.0,502.9 143.0,502.3 144.0,501.8 145.0,501.3 146.0,500.7 147.0,500.2 148.0,499.7 149.0,499.1 150.0,498.6 151.0,498.0 152.0,497.5 153.0,497.0 154.0,496.4 155.0,495.9 156.0,495.4 157.0,494.8 158.0,494.3 159.0,493.8 160.0,493.2 161.0,492.7 162.0,492.2 163.0,491.6 164.0,491.1 165.0,490.6 166.0,490.0 167.0,489.5 168.0,489.0 169.0,488.4 170.0,487.9 171.0,487.4 172.0,486.9 173.0,486.3 174.0,485.8 175.0,485.3 176.0,484.8 177.0,484.2 178.0,483.7 179.0,483.2 180.0,482.7 181.0,482.1 182.0,481.6 183.0,481.1 184.0,480.6 185.0,480.1 186.0,479.6 187.0,479.0 188.0,478.5 189.0,478.0 190.0,477.5 191.0,477.0 192.0,476.5 193.0,476.0 194.0,475.5 195.0,475.0 196.0,474.5 197.0,474.0 198.0,473.5 199.0,473.0 200.0,472.5 201.0,472.0 202.0,471.5 203.0,471.0 204.0,470.5 205.0,470.0 206.0,469.5 207.0,469.0 208.0,468.5 209.0,468.0 210.0,467.5 211.0,467.0 212.0,466.5 213.0,466.0 214.0,465.5 215.0,465.0 216.0,464.5 217.0,464.0 218.0,463.5 219.0,463.0 220.0,462.4 221.0,461.9 222.0,461.4 223.0,460.9 224.0,460.4 225.0,459.9 226.0,459.4 227.0,458.9 228.0,458.4 229.0,457.9 230.0,457.4 231.0,456.8 232.0,456.3 233.0,455.8 234.0,455.3 235.0,454.8 236.0,454.3 237.0,453.7 238.0,453.2 239.0,452.7 240.0,452.2 241.0,451.6 242.0,451.1 243.0,450.5 244.0,450.0 245.0,449.5 246.0,448.9 247.0,448.4 248.0,447.8 249.0,447.3 250.0,446.7 251.0,446.1 252.0,445.6 253.0,445.0 254.0,444.4 255.0,443.8 256.0,443.2 257.0,442.6 258.0,442.0 259.0,441.4 260.0,440.8 261.0,440.2 262.0,439.6 263.0,438.9 264.0,438.3 265.0,437.7 266.0,437.1 267.0,436.4 268.0,435.8 269.0,435.2 270.0,434.6 271.0,433.9 272.0,433.3 273.0,432.7 274.0,432.0 275.0,431.4 276.0,430.8 277.0,430.2 278.0,429.6 279.0,428.9 280.0,428.3 281.0,427.7 282.0,427.1 283.0,426.5 284.0,425.9 285.0,425.4 286.0,424.8 287.0,424.2 288.0,423.6 289.0,423.1 290.0,422.5 291.0,421.9 292.0,421.3 293.0,420.8 294.0,420.2 295.0,419.6 296.0,419.1 297.0,418.5 298.0,418.0 299.0,417.4 300.0,416.9 301.0,416.3 302.0,415.8 303.0,415.3 304.0,414.7 305.0,414.2 306.0,413.7 307.0,413.2 308.0,412.7 309.0,412.2 310.0,411.7 311.0,411.2 312.0,410.7 313.0,410.3 314.0,409.8 315.0,409.4 316.0,408.9 317.0,408.5 318.0,408.0 319.0,407.6 320.0,407.1 321.0,406.7 322.0,406.3 323.0,405.9 324.0,405.4 325.0,405.0 326.0,404.6 327.0,404.2 328.0,403.8 329.0,403.4 330.0,403.0 331.0,402.6 332.0,402.2 333.0,401.7 334.0,401.3 335.0,400.9 336.0,400.4 337.0,400.0 338.0,399.6 339.0,399.2 340.0,398.8 341.0,398.5 342.0,398.2 343.0,397.9 344.0,397.7 345.0,397.5 346.0,397.3 347.0,397.2 348.0,397.0 349.0,396.9 350.0,396.8 351.0,396.6 352.0,396.5 353.0,396.4 354.0,396.3 355.0,396.2 356.0,396.1 357.0,396.1 358.0,396.0 359.0,396.0 360.0,396.0 361.0,396.0 362.0,396.1 363.0,396.1 364.0,396.2 365.0,396.4 366.0,396.5 367.0,396.7 368.0,396.9 369.0,397.1 370.0,397.3 371.0,397.5 372.0,397.8 373.0,398.0 374.0,398.3 375.0,398.6 376.0,398.9 377.0,399.1 378.0,399.4 379.0,399.7 380.0,400.0 381.0,400.3 382.0,400.6 383.0,401.0 384.0,401.4 385.0,401.8 386.0,402.2 387.0,402.7 388.0,403.2 389.0,403.7 390.0,404.2 391.0,404.7 392.0,405.3 393.0,405.8 394.0,406.4 395.0,407.0 396.0,407.6 397.0,408.2 398.0,408.8 399.0,409.4 400.0,410.0 401.0,410.6 402.0,411.3 403.0,411.9 404.0,412.6 405.0,413.4 406.0,414.1 407.0,414.9 408.0,415.6 409.0,416.4 410.0,417.2 411.0,418.0 412.0,418.8 413.0,419.7 414.0,420.5 415.0,421.3 416.0,422.2 417.0,423.0 418.0,423.8 419.0,424.7 420.0,425.5 421.0,426.3 422.0,427.1 423.0,428.0 424.0,428.8 425.0,429.7 426.0,430.5 427.0,431.4 428.0,432.2 429.0,433.1 430.0,434.0 431.0,434.9 432.0,435.7 433.0,436.7 434.0,437.6 435.0,438.5 436.0,439.4 437.0,440.4 438.0,441.4 439.0,442.3 440.0,443.3 441.0,444.3 442.0,445.3 443.0,446.3 444.0,447.4 445.0,448.4 446.0,449.4 447.0,450.5 448.0,451.5 449.0,452.6 450.0,453.6 451.0,454.7 452.0,455.7 453.0,456.8 454.0,457.9 455.0,458.9 456.0,460.0 457.0,461.0 458.0,462.1 459.0,463.2 460.0,464.2 461.0,465.2 462.0,466.3 463.0,467.3 464.0,468.3 465.0,469.3 466.0,470.3 467.0,471.3 468.0,472.3 469.0,473.3 470.0,474.4 471.0,475.4 472.0,476.4 473.0,477.5 474.0,478.6 475.0,479.6 476.0,480.8 477.0,481.9 478.0,483.1 479.0,484.3 480.0,485.5 481.0,486.8 482.0,488.1 483.0,489.6 484.0,491.0 485.0,492.5 486.0,494.1 487.0,495.6 488.0,497.2 489.0,498.7 490.0,500.2 491.0,501.7 492.0,503.1 493.0,504.5 494.0,503.2 495.0,501.8 496.0,500.5 497.0,499.2 498.0,497.9 499.0,496.6 500.0,495.3 501.0,494.0 502.0,492.7 503.0,491.4 504.0,490.2 505.0,488.9 506.0,487.6 507.0,486.4 508.0,485.2 509.0,483.9 510.0,482.7 511.0,481.5 512.0,480.3 513.0,479.1 514.0,477.9 515.0,476.7 516.0,475.6 517.0,474.4 518.0,473.3 519.0,472.1 520.0,471.0 521.0,469.9 522.0,468.8 523.0,467.7 524.0,466.7 525.0,465.6 526.0,464.6 527.0,463.5 528.0,462.5 529.0,461.5 529.5,461.0" fill="none" stroke="#000" stroke-width="1"/>
<text x="8" y="520" font-size="4.4" font-weight="bold" fill="#000" stroke="#000" stroke-width="0.25" textLength="172" lengthAdjust="spacingAndGlyphs">20.04.2000 09:48 - WL1+ V 5.07 - C:\hexa\wl1plus\decker.wl1 - HEXAGON Software GmbH Kirchheim</text>
<rect x="6" y="5" width="16" height="16" fill="#C0C0C0"/>
<rect x="7" y="8" width="1" height="1" fill="#FF0000"/>
<rect x="7" y="11" width="1" height="1" fill="#FF0000"/>
<rect x="13" y="9" width="7" height="1" fill="#FF0000"/>
<rect x="19" y="9" width="1" height="7" fill="#FF0000"/>
<rect x="8" y="17" width="5" height="1" fill="#FF0000"/>
<rect x="7" y="13" width="2" height="4" fill="#FF0000"/>
<rect x="7" y="12" width="7" height="1" fill="#FFFF00"/>
<rect x="15" y="12" width="1" height="1" fill="#FFFF00"/>
<rect x="17" y="12" width="1" height="1" fill="#FFFF00"/>
<rect x="19" y="12" width="2" height="1" fill="#FFFF00"/>
<rect x="7" y="14" width="2" height="1" fill="#FFFF00"/>
<rect x="8" y="15" width="1" height="1" fill="#FFFF00"/>
<text x="24.00" y="17.00" font-size="11" fill="#fff" textLength="32.00" lengthAdjust="spacingAndGlyphs" font-weight="bold" >WL1+</text>
<text x="71.70" y="17.00" font-size="11" fill="#fff" textLength="94.10" lengthAdjust="spacingAndGlyphs" font-weight="bold" >Shaft Calculation</text>
<text x="172.70" y="17.00" font-size="11" fill="#fff" textLength="4.60" lengthAdjust="spacingAndGlyphs" font-weight="bold" >-</text>
<text x="183.50" y="17.00" font-size="11" fill="#fff" textLength="63.40" lengthAdjust="spacingAndGlyphs" font-weight="bold" >DECKER.wl1</text>
<rect x="592" y="6" width="16" height="14" fill="#D4D0C8"/>
<rect x="592" y="6" width="15" height="1" fill="#FFFFFF"/>
<rect x="592" y="6" width="1" height="13" fill="#FFFFFF"/>
<rect x="592" y="19" width="16" height="1" fill="#404040"/>
<rect x="607" y="6" width="1" height="14" fill="#404040"/>
<rect x="593" y="18" width="14" height="1" fill="#808080"/>
<rect x="606" y="7" width="1" height="12" fill="#808080"/>
<rect x="608" y="6" width="16" height="14" fill="#D4D0C8"/>
<rect x="608" y="6" width="15" height="1" fill="#FFFFFF"/>
<rect x="608" y="6" width="1" height="13" fill="#FFFFFF"/>
<rect x="608" y="19" width="16" height="1" fill="#404040"/>
<rect x="623" y="6" width="1" height="14" fill="#404040"/>
<rect x="609" y="18" width="14" height="1" fill="#808080"/>
<rect x="622" y="7" width="1" height="12" fill="#808080"/>
<rect x="626" y="6" width="16" height="14" fill="#D4D0C8"/>
<rect x="626" y="6" width="15" height="1" fill="#FFFFFF"/>
<rect x="626" y="6" width="1" height="13" fill="#FFFFFF"/>
<rect x="626" y="19" width="16" height="1" fill="#404040"/>
<rect x="641" y="6" width="1" height="14" fill="#404040"/>
<rect x="627" y="18" width="14" height="1" fill="#808080"/>
<rect x="640" y="7" width="1" height="12" fill="#808080"/>
<rect x="596" y="15" width="6" height="2" fill="#000"/>
<rect x="611" y="8" width="9" height="9" fill="#000"/>
<rect x="612" y="10" width="7" height="6" fill="#D4D0C8"/>
<rect x="630" y="9" width="2" height="1" fill="#000"/>
<rect x="636" y="9" width="2" height="1" fill="#000"/>
<rect x="631" y="10" width="2" height="1" fill="#000"/>
<rect x="635" y="10" width="2" height="1" fill="#000"/>
<rect x="632" y="11" width="2" height="1" fill="#000"/>
<rect x="634" y="11" width="2" height="1" fill="#000"/>
<rect x="633" y="12" width="2" height="1" fill="#000"/>
<rect x="633" y="12" width="2" height="1" fill="#000"/>
<rect x="634" y="13" width="2" height="1" fill="#000"/>
<rect x="632" y="13" width="2" height="1" fill="#000"/>
<rect x="635" y="14" width="2" height="1" fill="#000"/>
<rect x="631" y="14" width="2" height="1" fill="#000"/>
<rect x="636" y="15" width="2" height="1" fill="#000"/>
<rect x="630" y="15" width="2" height="1" fill="#000"/>
<text x="9.60" y="36.00" font-size="11" fill="#000" textLength="15.60" lengthAdjust="spacingAndGlyphs" stroke="#000" stroke-width="0.18">File</text>
<rect x="10" y="37" width="6" height="1" fill="#000"/>
<text x="37.70" y="36.00" font-size="11" fill="#000" textLength="17.00" lengthAdjust="spacingAndGlyphs" stroke="#000" stroke-width="0.18">Edit</text>
<rect x="38" y="37" width="7" height="1" fill="#000"/>
<text x="67.90" y="36.00" font-size="11" fill="#000" textLength="21.00" lengthAdjust="spacingAndGlyphs" stroke="#000" stroke-width="0.18">View</text>
<rect x="68" y="37" width="7" height="1" fill="#000"/>
<text x="157.90" y="36.00" font-size="11" fill="#000" textLength="20.20" lengthAdjust="spacingAndGlyphs" stroke="#000" stroke-width="0.18">CAD</text>
<rect x="158" y="37" width="7" height="1" fill="#000"/>
<text x="190.40" y="36.00" font-size="11" fill="#000" textLength="45.90" lengthAdjust="spacingAndGlyphs" stroke="#000" stroke-width="0.18">Database</text>
<rect x="190" y="37" width="8" height="1" fill="#000"/>
<text x="248.70" y="36.00" font-size="11" fill="#000" textLength="47.40" lengthAdjust="spacingAndGlyphs" stroke="#000" stroke-width="0.18">Document</text>
<rect x="256" y="37" width="6" height="1" fill="#000"/>
<text x="308.50" y="36.00" font-size="11" fill="#000" textLength="18.70" lengthAdjust="spacingAndGlyphs" stroke="#000" stroke-width="0.18">OLE</text>
<rect x="308" y="37" width="7" height="1" fill="#000"/>
<text x="339.80" y="36.00" font-size="11" fill="#000" textLength="20.60" lengthAdjust="spacingAndGlyphs" stroke="#000" stroke-width="0.18">Help</text>
<rect x="340" y="37" width="7" height="1" fill="#000"/>
<rect x="96" y="23" width="56" height="1" fill="#808080"/>
<rect x="96" y="23" width="1" height="18" fill="#808080"/>
<rect x="96" y="40" width="56" height="1" fill="#FFFFFF"/>
<rect x="151" y="23" width="1" height="18" fill="#FFFFFF"/>
<text x="102.50" y="37.00" font-size="11" fill="#000" textLength="43.70" lengthAdjust="spacingAndGlyphs" stroke="#000" stroke-width="0.18">Diagrams</text>
<rect x="102" y="38" width="7" height="1" fill="#000"/>
<rect x="96" y="41" width="205" height="340" fill="#D4D0C8"/>
<rect x="96" y="380" width="205" height="1" fill="#404040"/>
<rect x="300" y="41" width="1" height="340" fill="#404040"/>
<rect x="97" y="42" width="202" height="1" fill="#FFFFFF"/>
<rect x="97" y="42" width="1" height="337" fill="#FFFFFF"/>
<rect x="97" y="379" width="203" height="1" fill="#808080"/>
<rect x="299" y="42" width="1" height="338" fill="#808080"/>
<text x="115.50" y="56.00" font-size="11" fill="#000" textLength="55.00" lengthAdjust="spacingAndGlyphs" stroke="#000" stroke-width="0.18">Radial Load</text>
<rect x="116" y="57" width="7" height="1" fill="#000"/>
<rect x="287" y="49" width="1" height="7" fill="#000"/>
<rect x="288" y="50" width="1" height="5" fill="#000"/>
<rect x="289" y="51" width="1" height="3" fill="#000"/>
<rect x="290" y="52" width="1" height="1" fill="#000"/>
<text x="115.50" y="73.00" font-size="11" fill="#000" textLength="78.40" lengthAdjust="spacingAndGlyphs" stroke="#000" stroke-width="0.18">Bending Moment</text>
<rect x="116" y="74" width="7" height="1" fill="#000"/>
<rect x="287" y="66" width="1" height="7" fill="#000"/>
<rect x="288" y="67" width="1" height="5" fill="#000"/>
<rect x="289" y="68" width="1" height="3" fill="#000"/>
<rect x="290" y="69" width="1" height="1" fill="#000"/>
<rect x="99" y="78" width="199" height="17" fill="#0A246A"/>
<text x="115.50" y="90.00" font-size="11" fill="#fff" textLength="59.20" lengthAdjust="spacingAndGlyphs" stroke="#fff" stroke-width="0.18">Bending Line</text>
<rect x="156" y="91" width="6" height="1" fill="#fff"/>
<rect x="287" y="83" width="1" height="7" fill="#fff"/>
<rect x="288" y="84" width="1" height="5" fill="#fff"/>
<rect x="289" y="85" width="1" height="3" fill="#fff"/>
<rect x="290" y="86" width="1" height="1" fill="#fff"/>
<text x="115.50" y="107.00" font-size="11" fill="#000" textLength="67.30" lengthAdjust="spacingAndGlyphs" stroke="#000" stroke-width="0.18">Bending Angle</text>
<rect x="157" y="108" width="6" height="1" fill="#000"/>
<rect x="287" y="100" width="1" height="7" fill="#000"/>
<rect x="288" y="101" width="1" height="5" fill="#000"/>
<rect x="289" y="102" width="1" height="3" fill="#000"/>
<rect x="290" y="103" width="1" height="1" fill="#000"/>
<rect x="100" y="115" width="197" height="1" fill="#808080"/>
<rect x="100" y="116" width="197" height="1" fill="#FFFFFF"/>
<text x="115.50" y="133.00" font-size="11" fill="#000" textLength="70.60" lengthAdjust="spacingAndGlyphs" stroke="#000" stroke-width="0.18">Bending Stress</text>
<rect x="164" y="134" width="3" height="1" fill="#000"/>
<rect x="287" y="126" width="1" height="7" fill="#000"/>
<rect x="288" y="127" width="1" height="5" fill="#000"/>
<rect x="289" y="128" width="1" height="3" fill="#000"/>
<rect x="290" y="129" width="1" height="1" fill="#000"/>
<text x="115.50" y="150.00" font-size="11" fill="#000" textLength="60.50" lengthAdjust="spacingAndGlyphs" stroke="#000" stroke-width="0.18">Shear Stress</text>
<rect x="116" y="151" width="7" height="1" fill="#000"/>
<text x="115.50" y="167.00" font-size="11" fill="#000" textLength="82.90" lengthAdjust="spacingAndGlyphs" stroke="#000" stroke-width="0.18">Tension/Pressure</text>
<rect x="116" y="168" width="7" height="1" fill="#000"/>
<text x="115.50" y="184.00" font-size="11" fill="#000" textLength="82.90" lengthAdjust="spacingAndGlyphs" stroke="#000" stroke-width="0.18">Reference Stress</text>
<rect x="116" y="185" width="8" height="1" fill="#000"/>
<rect x="287" y="177" width="1" height="7" fill="#000"/>
<rect x="288" y="178" width="1" height="5" fill="#000"/>
<rect x="289" y="179" width="1" height="3" fill="#000"/>
<rect x="290" y="180" width="1" height="1" fill="#000"/>
<rect x="100" y="192" width="197" height="1" fill="#808080"/>
<rect x="100" y="193" width="197" height="1" fill="#FFFFFF"/>
<text x="116.50" y="211.00" font-size="11" fill="#FFFFFF" textLength="156.10" lengthAdjust="spacingAndGlyphs" >Tension/Pressure perm. DIN 743</text>
<rect x="116" y="212" width="7" height="1" fill="#FFFFFF"/>
<text x="115.50" y="210.00" font-size="11" fill="#808080" textLength="156.10" lengthAdjust="spacingAndGlyphs" >Tension/Pressure perm. DIN 743</text>
<rect x="116" y="211" width="7" height="1" fill="#808080"/>
<text x="116.50" y="228.00" font-size="11" fill="#FFFFFF" textLength="144.10" lengthAdjust="spacingAndGlyphs" >Bending Stress perm. DIN 743</text>
<rect x="166" y="229" width="3" height="1" fill="#FFFFFF"/>
<text x="115.50" y="227.00" font-size="11" fill="#808080" textLength="144.10" lengthAdjust="spacingAndGlyphs" >Bending Stress perm. DIN 743</text>
<rect x="165" y="228" width="3" height="1" fill="#808080"/>
<text x="116.50" y="245.00" font-size="11" fill="#FFFFFF" textLength="134.10" lengthAdjust="spacingAndGlyphs" >Shear Stress perm. DIN 743</text>
<rect x="116" y="246" width="7" height="1" fill="#FFFFFF"/>
<text x="115.50" y="244.00" font-size="11" fill="#808080" textLength="134.10" lengthAdjust="spacingAndGlyphs" >Shear Stress perm. DIN 743</text>
<rect x="116" y="245" width="7" height="1" fill="#808080"/>
<text x="116.50" y="262.00" font-size="11" fill="#FFFFFF" textLength="160.70" lengthAdjust="spacingAndGlyphs" >Safety endurance failure DIN 743</text>
<rect x="116" y="263" width="7" height="1" fill="#FFFFFF"/>
<text x="115.50" y="261.00" font-size="11" fill="#808080" textLength="160.70" lengthAdjust="spacingAndGlyphs" >Safety endurance failure DIN 743</text>
<rect x="116" y="262" width="7" height="1" fill="#808080"/>
<text x="116.50" y="279.00" font-size="11" fill="#FFFFFF" textLength="125.70" lengthAdjust="spacingAndGlyphs" >Safety yield point DIN 743</text>
<rect x="116" y="280" width="7" height="1" fill="#FFFFFF"/>
<text x="115.50" y="278.00" font-size="11" fill="#808080" textLength="125.70" lengthAdjust="spacingAndGlyphs" >Safety yield point DIN 743</text>
<rect x="116" y="279" width="7" height="1" fill="#808080"/>
<rect x="100" y="286" width="197" height="1" fill="#808080"/>
<rect x="100" y="287" width="197" height="1" fill="#FFFFFF"/>
<text x="115.50" y="304.00" font-size="11" fill="#000" textLength="34.60" lengthAdjust="spacingAndGlyphs" stroke="#000" stroke-width="0.18">Torsion</text>
<rect x="116" y="305" width="7" height="1" fill="#000"/>
<text x="115.50" y="321.00" font-size="11" fill="#000" textLength="33.30" lengthAdjust="spacingAndGlyphs" stroke="#000" stroke-width="0.18">Torque</text>
<rect x="116" y="322" width="7" height="1" fill="#000"/>
<rect x="100" y="329" width="197" height="1" fill="#808080"/>
<rect x="100" y="330" width="197" height="1" fill="#FFFFFF"/>
<text x="116.50" y="348.00" font-size="11" fill="#FFFFFF" textLength="103.00" lengthAdjust="spacingAndGlyphs" >Dynamic Bending Line</text>
<rect x="116" y="349" width="7" height="1" fill="#FFFFFF"/>
<text x="115.50" y="347.00" font-size="11" fill="#808080" textLength="103.00" lengthAdjust="spacingAndGlyphs" >Dynamic Bending Line</text>
<rect x="116" y="348" width="7" height="1" fill="#808080"/>
<rect x="100" y="355" width="197" height="1" fill="#808080"/>
<rect x="100" y="356" width="197" height="1" fill="#FFFFFF"/>
<text x="115.50" y="373.00" font-size="11" fill="#000" textLength="31.70" lengthAdjust="spacingAndGlyphs" stroke="#000" stroke-width="0.18">Export</text>
<rect x="128" y="374" width="6" height="1" fill="#000"/>
<rect x="295" y="75" width="110" height="74" fill="#D4D0C8"/>
<rect x="295" y="148" width="110" height="1" fill="#404040"/>
<rect x="404" y="75" width="1" height="74" fill="#404040"/>
<rect x="296" y="76" width="107" height="1" fill="#FFFFFF"/>
<rect x="296" y="76" width="1" height="71" fill="#FFFFFF"/>
<rect x="296" y="147" width="108" height="1" fill="#808080"/>
<rect x="403" y="76" width="1" height="72" fill="#808080"/>
<rect x="298" y="78" width="104" height="17" fill="#0A246A"/>
<text x="314.70" y="90.00" font-size="11" fill="#fff" textLength="65.60" lengthAdjust="spacingAndGlyphs" stroke="#fff" stroke-width="0.18">x-y, x-z, x-yz</text>
<text x="314.70" y="107.00" font-size="11" fill="#000" textLength="15.10" lengthAdjust="spacingAndGlyphs" stroke="#000" stroke-width="0.18">x-y</text>
<text x="314.70" y="124.00" font-size="11" fill="#000" textLength="14.20" lengthAdjust="spacingAndGlyphs" stroke="#000" stroke-width="0.18">x-z</text>
<text x="314.70" y="141.00" font-size="11" fill="#000" textLength="20.80" lengthAdjust="spacingAndGlyphs" stroke="#000" stroke-width="0.18">x-yz</text>
</svg>
</body></html>
